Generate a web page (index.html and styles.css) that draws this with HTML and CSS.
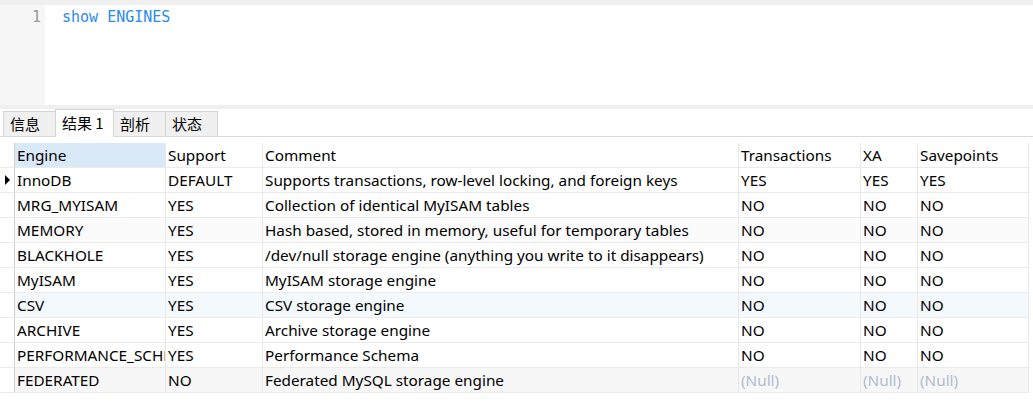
FILE: index.html
```html
<!DOCTYPE html>
<html>
<head>
<meta charset="utf-8">
<link rel="stylesheet" href="styles.css">
</head>
<body>
<div class="app">
  <div class="top-gap"></div>
  <div class="editor">
    <div class="gutter"><span class="ln">1</span></div>
    <div class="code"><span class="kw">show ENGINES</span></div>
  </div>
  <div class="sep"></div>
  <div class="tabs">
    <div class="tab">信息</div>
    <div class="tab active">结果 1</div>
    <div class="tab">剖析</div>
    <div class="tab">状态</div>
  </div>
  <div class="grid-wrap">
    <div class="grid">
      <div class="row head">
        <div class="cell ind"></div>
        <div class="cell sel">Engine</div>
        <div class="cell">Support</div>
        <div class="cell">Comment</div>
        <div class="cell">Transactions</div>
        <div class="cell">XA</div>
        <div class="cell">Savepoints</div>
      </div>
      <div class="row">
        <div class="cell ind"><span class="arrow"></span></div>
        <div class="cell">InnoDB</div>
        <div class="cell">DEFAULT</div>
        <div class="cell">Supports transactions, row-level locking, and foreign keys</div>
        <div class="cell">YES</div>
        <div class="cell">YES</div>
        <div class="cell">YES</div>
      </div>
      <div class="row">
        <div class="cell ind"></div>
        <div class="cell">MRG_MYISAM</div>
        <div class="cell">YES</div>
        <div class="cell">Collection of identical MyISAM tables</div>
        <div class="cell">NO</div>
        <div class="cell">NO</div>
        <div class="cell">NO</div>
      </div>
      <div class="row alt">
        <div class="cell ind"></div>
        <div class="cell">MEMORY</div>
        <div class="cell">YES</div>
        <div class="cell">Hash based, stored in memory, useful for temporary tables</div>
        <div class="cell">NO</div>
        <div class="cell">NO</div>
        <div class="cell">NO</div>
      </div>
      <div class="row">
        <div class="cell ind"></div>
        <div class="cell">BLACKHOLE</div>
        <div class="cell">YES</div>
        <div class="cell">/dev/null storage engine (anything you write to it disappears)</div>
        <div class="cell">NO</div>
        <div class="cell">NO</div>
        <div class="cell">NO</div>
      </div>
      <div class="row">
        <div class="cell ind"></div>
        <div class="cell">MyISAM</div>
        <div class="cell">YES</div>
        <div class="cell">MyISAM storage engine</div>
        <div class="cell">NO</div>
        <div class="cell">NO</div>
        <div class="cell">NO</div>
      </div>
      <div class="row hover">
        <div class="cell ind"></div>
        <div class="cell">CSV</div>
        <div class="cell">YES</div>
        <div class="cell">CSV storage engine</div>
        <div class="cell">NO</div>
        <div class="cell">NO</div>
        <div class="cell">NO</div>
      </div>
      <div class="row">
        <div class="cell ind"></div>
        <div class="cell">ARCHIVE</div>
        <div class="cell">YES</div>
        <div class="cell">Archive storage engine</div>
        <div class="cell">NO</div>
        <div class="cell">NO</div>
        <div class="cell">NO</div>
      </div>
      <div class="row">
        <div class="cell ind"></div>
        <div class="cell clip">PERFORMANCE_SCHEMA</div>
        <div class="cell">YES</div>
        <div class="cell">Performance Schema</div>
        <div class="cell">NO</div>
        <div class="cell">NO</div>
        <div class="cell">NO</div>
      </div>
      <div class="row grey">
        <div class="cell ind"></div>
        <div class="cell">FEDERATED</div>
        <div class="cell">NO</div>
        <div class="cell">Federated MySQL storage engine</div>
        <div class="cell null">(Null)</div>
        <div class="cell null">(Null)</div>
        <div class="cell null">(Null)</div>
      </div>
    </div>
  </div>
</div>
</body>
</html>
```

FILE: styles.css
```css
html, body {
  margin: 0;
  padding: 0;
  background: #ffffff;
}
.app {
  width: 1033px;
  height: 405px;
  overflow: hidden;
  background: #ffffff;
}
.top-gap {
  height: 5px;
  background: #f0f0f0;
}
.editor {
  height: 100px;
  display: flex;
  background: #ffffff;
}
.gutter {
  width: 45px;
  background: #f7f7f7;
  box-sizing: border-box;
  padding-right: 4px;
  text-align: right;
}
.ln, .kw {
  font-family: "DejaVu Sans Mono", "Liberation Mono", monospace;
  font-size: 15px;
  line-height: 22px;
}
.ln {
  color: #999999;
  display: block;
  margin-top: 1px;
}
.code {
  padding-left: 17px;
  padding-top: 1px;
}
.kw {
  color: #2a8af0;
  display: block;
}
.sep {
  height: 4px;
  background: #f0f0f0;
}
.tabs {
  height: 27px;
  display: flex;
  align-items: flex-end;
  padding-left: 3px;
  border-bottom: 1px solid #d9d9d9;
  font-family: "Noto Sans CJK SC", "Noto Sans", sans-serif;
  font-size: 15px;
  color: #000000;
}
.tab {
  height: 25px;
  box-sizing: border-box;
  min-width: 53px;
  padding: 0 6px;
  margin-left: -1px;
  border: 1px solid #d4d4d4;
  border-bottom: none;
  background: #f0f0f0;
  line-height: 23px;
}
.tab:first-child {
  margin-left: 0;
}
.tab.active {
  height: 28px;
  min-width: 59px;
  margin-bottom: -1px;
  background: #ffffff;
  line-height: 26px;
  position: relative;
}
.grid-wrap {
  padding-top: 6px;
}
.grid {
  width: 1029px;
  font-family: "Noto Sans", "Noto Sans CJK SC", sans-serif;
  font-size: 15.3px;
  color: #000000;
}
.row {
  display: grid;
  grid-template-columns: 15px 151px 97px 476px 122px 57px 111px;
  height: 25px;
}
.cell {
  box-sizing: border-box;
  border-right: 1px solid #e8e8e8;
  border-bottom: 1px solid #ebebeb;
  padding-left: 2px;
  padding-top: 1px;
  line-height: 23px;
  white-space: nowrap;
  overflow: hidden;
}
.cell.ind {
  border-right: 1px solid #d0d0d0;
  padding-left: 0;
  position: relative;
}
.head .cell.sel {
  background: #d9e9f8;
}
.row.alt .cell:not(.ind) {
  background: #fbfbfb;
}
.row.hover .cell:not(.ind) {
  background: #f4f9fd;
}
.row.grey .cell:not(.ind) {
  background: #f7f7f7;
}
.cell.null {
  color: #b0bbd0;
}
.cell.clip {
  text-overflow: clip;
}
.arrow {
  position: absolute;
  left: 5px;
  top: 7px;
  width: 0;
  height: 0;
  border-top: 5px solid transparent;
  border-bottom: 5px solid transparent;
  border-left: 5px solid #000000;
}
```
